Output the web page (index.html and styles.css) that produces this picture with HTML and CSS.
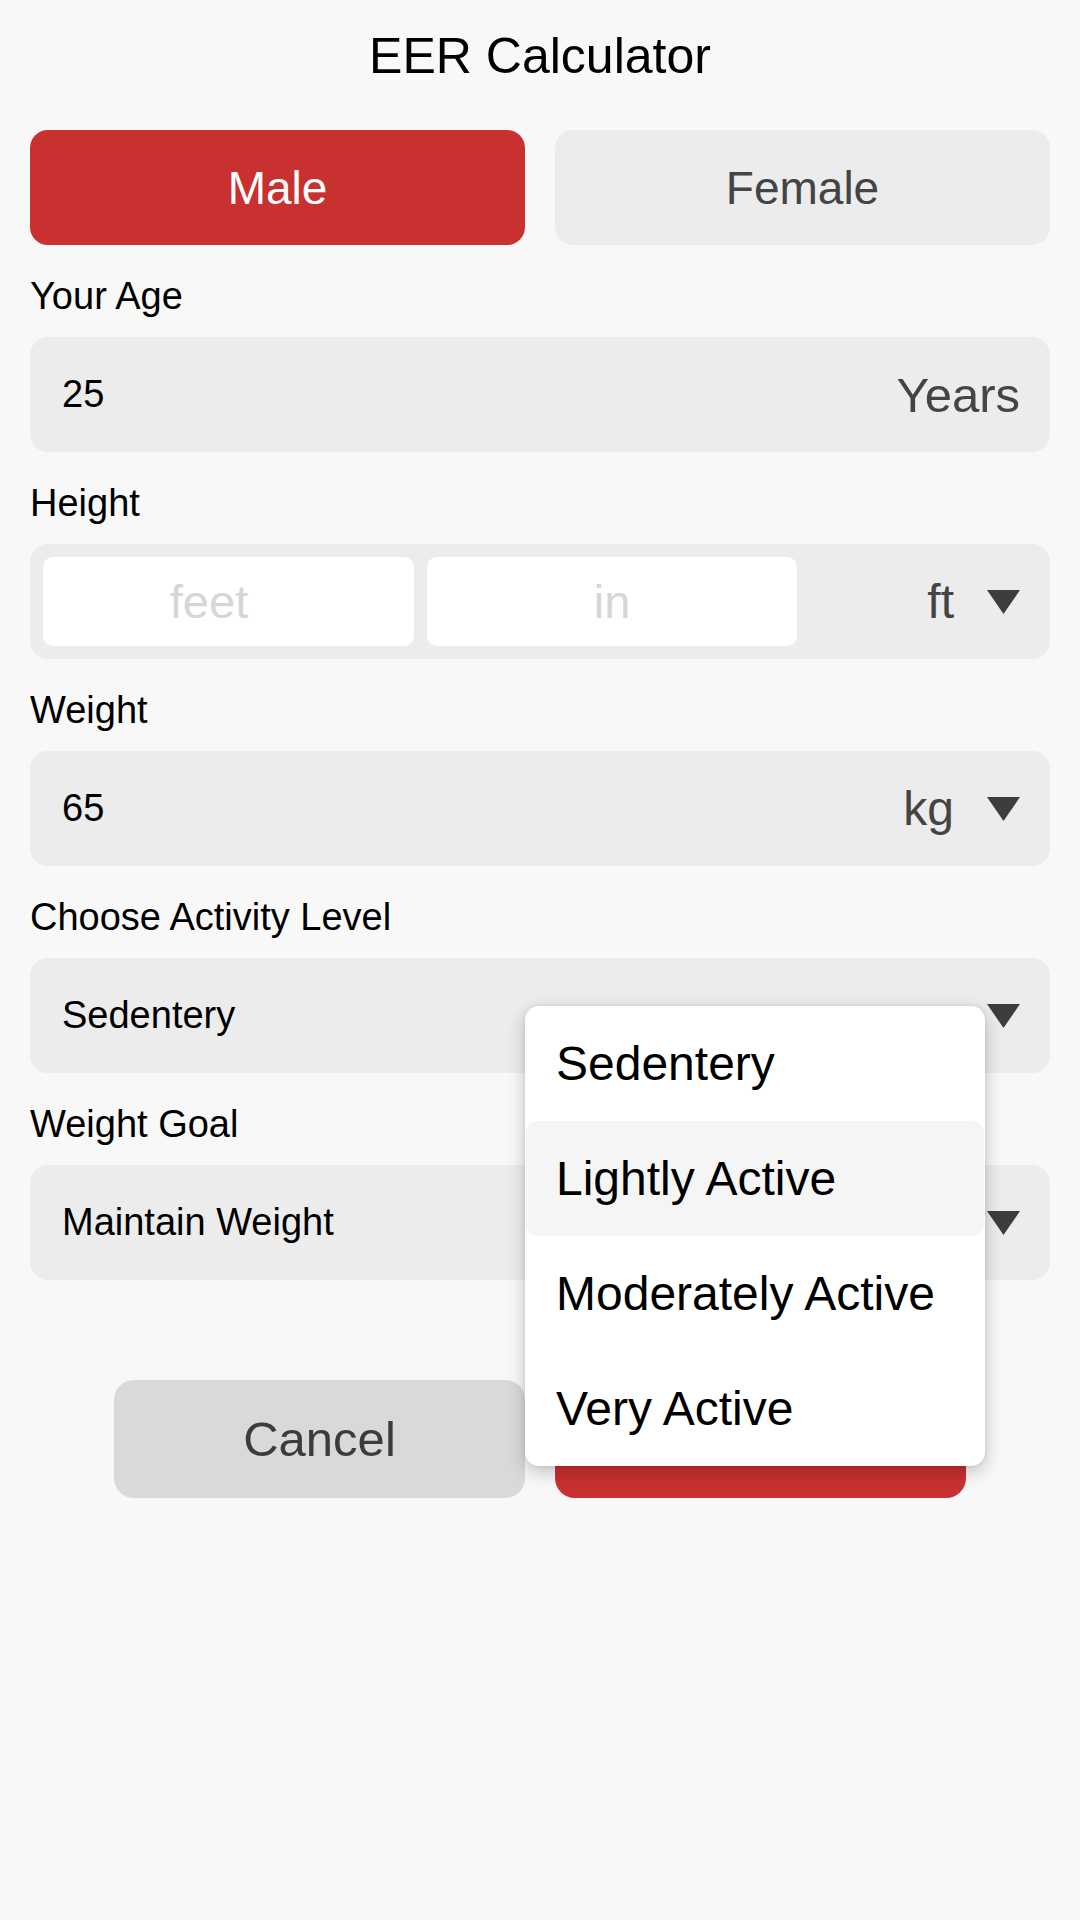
FILE: index.html
```html
<!DOCTYPE html>
<html lang="en">
<head>
<meta charset="utf-8">
<title>EER Calculator</title>
<link rel="stylesheet" href="styles.css">
</head>
<body>
<div class="screen">
  <h1 class="title">EER Calculator</h1>

  <div class="gender">
    <div class="seg seg-active">Male</div>
    <div class="seg">Female</div>
  </div>

  <div class="label">Your Age</div>
  <div class="field">
    <span class="value">25</span>
    <span class="unit unit-end">Years</span>
  </div>

  <div class="label">Height</div>
  <div class="field field-height">
    <div class="box box-feet">feet</div>
    <div class="box">in</div>
    <div class="unit-group unit-group-height">
      <span class="unit">ft</span>
      <svg class="caret" viewBox="0 0 33 24" width="33" height="24"><polygon points="0,0 33,0 16.5,24" fill="#3d3d3d"/></svg>
    </div>
  </div>

  <div class="label">Weight</div>
  <div class="field">
    <span class="value">65</span>
    <div class="unit-group">
      <span class="unit">kg</span>
      <svg class="caret" viewBox="0 0 33 24" width="33" height="24"><polygon points="0,0 33,0 16.5,24" fill="#3d3d3d"/></svg>
    </div>
  </div>

  <div class="label">Choose Activity Level</div>
  <div class="field field-menu">
    <span class="value">Sedentery</span>
    <div class="unit-group">
      <svg class="caret" viewBox="0 0 33 24" width="33" height="24"><polygon points="0,0 33,0 16.5,24" fill="#3d3d3d"/></svg>
    </div>
    <div class="menu">
      <div class="menu-item">Sedentery</div>
      <div class="menu-item menu-item-hover">Lightly Active</div>
      <div class="menu-item">Moderately Active</div>
      <div class="menu-item">Very Active</div>
    </div>
  </div>

  <div class="label">Weight Goal</div>
  <div class="field">
    <span class="value">Maintain Weight</span>
    <div class="unit-group">
      <svg class="caret" viewBox="0 0 33 24" width="33" height="24"><polygon points="0,0 33,0 16.5,24" fill="#3d3d3d"/></svg>
    </div>
  </div>

  <div class="actions">
    <div class="action action-cancel">Cancel</div>
    <div class="action action-primary"></div>
  </div>
</div>
</body>
</html>
```

FILE: styles.css
```css
* {
  box-sizing: border-box;
}

html, body {
  margin: 0;
  padding: 0;
  background: #f8f8f8;
}

body {
  font-family: "Liberation Sans", Arial, sans-serif;
  color: #000;
  width: 1080px;
  height: 1920px;
}

.screen {
  padding: 0 30px;
}

.title {
  margin: 0;
  height: 112px;
  display: flex;
  align-items: center;
  justify-content: center;
  font-size: 50px;
  font-weight: normal;
  color: #000;
}

.gender {
  margin-top: 18px;
  display: grid;
  grid-template-columns: 1fr 1fr;
  gap: 30px;
}

.seg {
  height: 115px;
  border-radius: 18px;
  background: #ececec;
  color: #444;
  font-size: 46px;
  display: flex;
  align-items: center;
  justify-content: center;
}

.seg-active {
  background: #c93030;
  color: #fff;
}

.label {
  margin-top: 30px;
  margin-bottom: 20px;
  height: 42px;
  line-height: 42px;
  font-size: 38px;
  color: #000;
}

.field {
  position: relative;
  height: 115px;
  border-radius: 18px;
  background: #ececec;
  display: flex;
  align-items: center;
  padding: 0 30px 0 32px;
}

.value {
  font-size: 38px;
  color: #000;
}

.unit {
  font-size: 48px;
  color: #444;
}

.unit-end {
  margin-left: auto;
  font-size: 49px;
}

.unit-group {
  margin-left: auto;
  display: flex;
  align-items: center;
  gap: 33px;
}

.caret {
  display: block;
}

.field-height {
  padding: 13px;
  gap: 13px;
}

.box {
  height: 89px;
  width: 370px;
  background: #fff;
  border-radius: 10px;
  display: flex;
  align-items: center;
  justify-content: center;
  font-size: 47px;
  color: #d6d6d6;
}

.box-feet {
  width: 371px;
  padding-right: 39px;
}

.unit-group-height {
  padding-right: 17px;
}

.menu {
  position: absolute;
  top: 48px;
  left: 495px;
  width: 460px;
  background: #fff;
  border-radius: 14px;
  box-shadow: 0 6px 18px rgba(0, 0, 0, 0.22), 0 0 5px rgba(0, 0, 0, 0.08);
  z-index: 10;
}

.menu-item {
  height: 115px;
  display: flex;
  align-items: center;
  padding-left: 31px;
  font-size: 48px;
  color: #000;
}

.menu-item-hover {
  background: #f5f5f5;
  border-radius: 12px;
  margin: 0 1px;
  padding-left: 30px;
}

.actions {
  margin-top: 100px;
  display: flex;
  justify-content: center;
  gap: 30px;
}

.action {
  width: 411px;
  height: 118px;
  border-radius: 20px;
  display: flex;
  align-items: center;
  justify-content: center;
  font-size: 49px;
}

.action-cancel {
  background: #d9d9d9;
  color: #3c3c3c;
}

.action-primary {
  background: #c93030;
}
```
